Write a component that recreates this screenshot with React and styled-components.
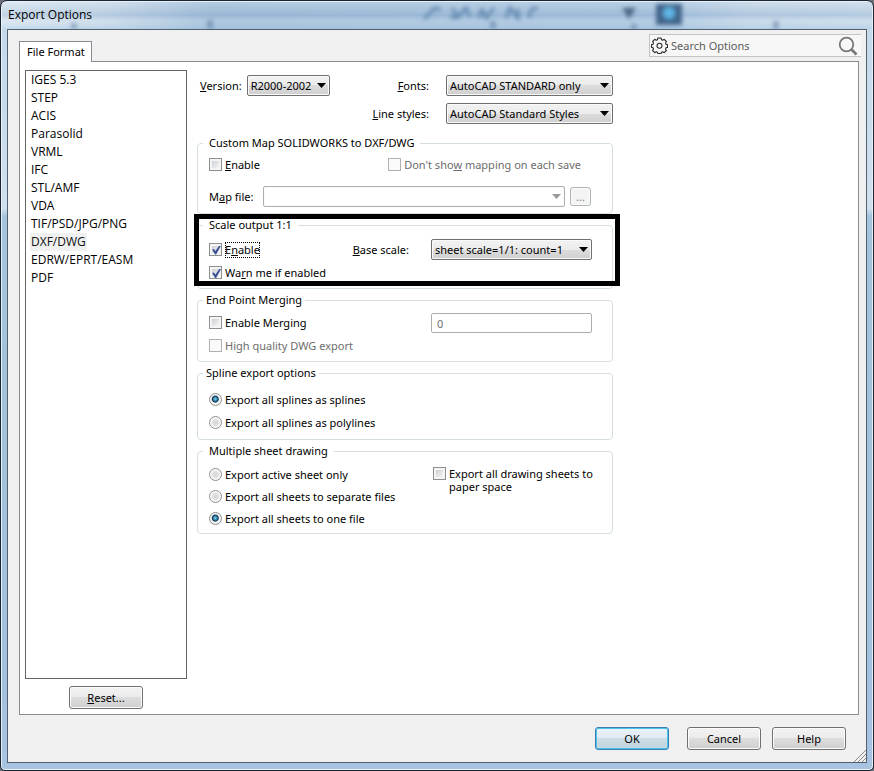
import { useState } from "react";
import styled, { createGlobalStyle, css } from "styled-components";

const GlobalStyle = createGlobalStyle`
	* {
		box-sizing: border-box;
	}
	body {
		margin: 0;
		background: #6b6f78;
	}
	body, button, input, select {
		font-family: "Noto Sans", "Open Sans", sans-serif;
		font-size: 11px;
		line-height: 16px;
		color: #000;
	}
`;

const Window = styled.div`
	position: relative;
	display: flex;
	flex-direction: column;
	min-height: 100vh;
	padding: 0 6px 7px;
	border: 1px solid #1c2430;
	border-radius: 7px 7px 5px 5px;
	background: linear-gradient(180deg, #c3d8ea 0, #cfe0ee 27%, #a5c3dc 28%, #a3c0dc 88%, #a9c4e0 100%);
	box-shadow: inset 0 0 0 1px #e6f2fb;
	overflow: hidden;
`;
const TitleBar = styled.header`
	position: relative;
	display: flex;
	align-items: center;
	height: 28px;
	margin: 0 -5px;
	padding: 0 6px;
`;
const Title = styled.h1`
	position: relative;
	margin: 0;
	font-family: "Open Sans", "Noto Sans", sans-serif;
	font-size: 12px;
	font-weight: 400;
	line-height: 16px;
`;
const Glass = styled.svg`
	position: absolute;
	inset: 0;
	width: 100%;
	height: 100%;
`;
const Client = styled.main`
	display: flex;
	flex-direction: column;
	flex: 1;
	padding: 4px 5px 12px 11px;
	border: 1px solid #52616f;
	background: #f0f0f0;
`;
const TopRow = styled.div`
	display: flex;
	justify-content: space-between;
	align-items: flex-start;
	height: 27px;
`;
const Tab = styled.button`
	align-self: flex-end;
	position: relative;
	height: 21px;
	margin-bottom: -1px;
	padding: 0 6px 0 7px;
	border: 1px solid #898c95;
	border-bottom: none;
	background: #fff;
`;
const SearchBox = styled.label`
	display: flex;
	align-items: center;
	gap: 3px;
	width: 212px;
	height: 23px;
	padding: 0 3px 0 1px;
	border: 1px solid #c4c4c4;
	border-right: none;
	background: #f7f7f7;
`;
const SearchInput = styled.input`
	flex: 1;
	min-width: 0;
	padding: 0;
	border: none;
	outline: none;
	background: transparent;
	&::placeholder {
		color: #5c5c5c;
		opacity: 1;
	}
`;
const Panel = styled.section`
	display: flex;
	flex: 1;
	gap: 10px;
	margin-right: 2px;
	padding: 8px 5px 5px;
	border: 1px solid #898c95;
	background: #fff;
`;
const Side = styled.div`
	display: flex;
	flex-direction: column;
	align-items: center;
	gap: 7px;
	width: 162px;
`;
const FormatList = styled.select`
	flex: 1;
	width: 100%;
	padding: 0 4px;
	border: 1px solid #646464;
	border-radius: 0;
	background: #fff;
	outline: none;
	overflow: hidden;
	font-size: 12px;
	font-family: "Open Sans", "Noto Sans", sans-serif;
	option {
		width: fit-content;
		height: 18px;
		min-height: 18px;
		padding: 0 1px;
		line-height: 18px;
	}
	option:checked {
		background: linear-gradient(#f0f0f0, #f0f0f0);
	}
`;
const Button = styled.button`
	width: ${(p) => (p.$small ? "21px" : "74px")};
	height: ${(p) => (p.$small ? "19px" : "23px")};
	padding: 0;
	border: 1px solid #707070;
	border-radius: 3px;
	background: linear-gradient(#f2f2f2 0, #ebebeb 50%, #dddddd 50%, #cfcfcf 100%);
	box-shadow: inset 0 0 0 1px #fcfcfc;
	${(p) => p.$primary && css`
		margin-right: 7px;
		border-color: #3c7fb1;
		background: linear-gradient(#eaf3f8 0, #dfebf2 50%, #cddde6 50%, #c2d3dd 100%);
		box-shadow: inset 0 0 0 1px #48c4ee;
	`}
	&:disabled {
		border-color: #adb2b5;
		background: #f4f4f4;
		color: #838383;
	}
`;
const Form = styled.form`
	display: flex;
	flex-direction: column;
	flex: 0 1 416px;
	gap: 3px;
	padding-top: 5px;
`;
const Drawing = styled.div`
	display: grid;
	grid-template-columns: auto 83px 1fr 167px;
	align-items: center;
	row-gap: 7px;
	column-gap: 5px;
	margin-bottom: 8px;
	padding-left: 3px;
`;
const FieldLabel = styled.label`
	justify-self: ${(p) => (p.$end ? "end" : "start")};
	padding-right: ${(p) => (p.$end ? "12px" : "0")};
	${(p) => p.$last && css`grid-column: 3;`}
`;
const Drop = styled.div`
	display: grid;
	flex: ${(p) => (p.$grow ? 1 : "none")};
	width: ${(p) => (p.$wide ? "161px" : "auto")};
	align-items: center;
	select, svg {
		grid-area: 1 / 1;
	}
	svg {
		justify-self: end;
		margin-right: 4px;
		pointer-events: none;
	}
`;
const Select = styled.select`
	width: 100%;
	height: 21px;
	padding: 0 16px 0 3px;
	appearance: none;
	border: 1px solid #707070;
	border-radius: 2px;
	background: linear-gradient(#f2f2f2 0, #ebebeb 50%, #dddddd 50%, #cfcfcf 100%);
	box-shadow: inset 0 0 0 1px #fafafa;
	&:disabled {
		border-color: #abadb3;
		background: #fff;
		opacity: 1;
	}
`;
const Group = styled.fieldset`
	position: relative;
	display: flex;
	flex-direction: column;
	gap: ${(p) => p.$gap || 7}px;
	min-width: 0;
	min-height: ${(p) => p.$height}px;
	margin: 0;
	padding: ${(p) => p.$top}px ${(p) => p.$right || 20}px 5px 11px;
	border: 1px solid #d5dfe0;
	border-radius: 4px;
`;
const Legend = styled.legend`
	margin-left: -6px;
	padding: 0 ${(p) => (p.$tight ? 3 : 6)}px;
`;
const Highlight = styled.div`
	position: relative;
	&::after {
		content: "";
		position: absolute;
		inset: -3px -7px 3px -3px;
		border: 5px solid #000;
		pointer-events: none;
	}
`;
const Row = styled.div`
	display: flex;
	align-items: ${(p) => (p.$top ? "flex-start" : "center")};
	justify-content: space-between;
	gap: ${(p) => p.$gap || 0}px;
	padding-right: ${(p) => p.$right || 0}px;
`;
const Stack = styled.div`
	display: flex;
	flex-direction: column;
	gap: 6px;
`;
const MapField = styled(Row)`
	flex: 1;
`;
const Choice = styled.label`
	display: flex;
	align-items: flex-start;
	gap: 3px;
	width: ${(p) => (p.$wrap ? "169px" : "fit-content")};
	line-height: ${(p) => (p.$wrap ? "13px" : "16px")};
	color: ${(p) => (p.$off ? "#6d6d6d" : "#000")};
	input {
		margin-top: ${(p) => (p.$wrap ? "0" : "1px")};
	}
`;
const Focus = styled.span`
	outline: ${(p) => (p.$on ? "1px dotted #000" : "none")};
	outline-offset: -1px;
`;
const Check = styled.input.attrs({ type: "checkbox" })`
	flex: none;
	display: grid;
	place-items: center;
	width: 13px;
	height: 13px;
	margin: 0;
	padding: 2px;
	appearance: none;
	border: 1px solid #8e8f8f;
	background: linear-gradient(135deg, #cbcfd5, #f6f6f6) content-box, #f4f4f4;
	&:disabled {
		border-color: #b1b1b1;
		background: #fafafa;
	}
	&:checked::before {
		content: "";
		width: 9px;
		height: 9px;
		background: #3d5598;
		clip-path: polygon(0 45%, 22% 38%, 38% 62%, 80% 0, 100% 4%, 46% 100%, 34% 100%);
	}
`;
const Radio = styled.input.attrs({ type: "radio" })`
	flex: none;
	width: 13px;
	height: 13px;
	margin: 0;
	appearance: none;
	border: 1px solid #8e8f8f;
	border-radius: 50%;
	background: radial-gradient(circle, #d4d4d4 0, #e2e2e2 3px, #fbfbfb 5px);
	&:checked {
		background: radial-gradient(circle at 48% 46%, #8fdcf2 0, #2a7ca8 2px, #12344f 3px, #f4f4f4 4px);
	}
`;
const TextField = styled.input`
	width: 161px;
	height: 20px;
	padding: 0 5px;
	border: 1px solid #abadb3;
	border-radius: 2px;
	background: #fff;
	color: #6d6d6d;
`;
const Footer = styled.footer`
	display: flex;
	justify-content: flex-end;
	gap: 11px;
	padding: 12px 15px 0 0;
`;
const Grip = styled.svg`
	position: absolute;
	right: 7px;
	bottom: 8px;
`;

const formats = [
	"IGES 5.3", "STEP", "ACIS", "Parasolid", "VRML", "IFC",
	"STL/AMF", "VDA", "TIF/PSD/JPG/PNG", "DXF/DWG", "EDRW/EPRT/EASM", "PDF",
];

function Dropdown({ id, text, grow, wide, disabled }) {
	return (
		<Drop $grow={grow} $wide={wide}>
			<Select id={id} disabled={disabled}>
				<option>{text}</option>
			</Select>
			<svg width="9" height="5" viewBox="0 0 9 5">
				<path d="M0 0h9L4.5 5z" fill={disabled ? "#9a9a9a" : "#000"} />
			</svg>
		</Drop>
	);
}

function GearIcon() {
	return (
		<svg width="17" height="17" viewBox="0 0 17 17" fill="none" stroke="#2b2b2b" strokeWidth="1.1" strokeLinejoin="round">
			<path d="M6.900 1h3.200l.4 1.700 1.200.5 1.500-.9 2.200 2.200-.9 1.500.5 1.200 1.500.4v2.800l-1.500.4-.5 1.200.9 1.500-2.200 2.200-1.500-.9-1.200.5-.4 1.200H6.900l-.4-1.200-1.200-.5-1.500.9-2.200-2.200.9-1.500L2 10.800l-1.400-.4V7.600L2 7.200l.5-1.200-.9-1.500 2.200-2.200 1.500.9 1.200-.5z" />
			<circle cx="8.500" cy="8.800" r="2.500" />
		</svg>
	);
}

function SearchIcon() {
	return (
		<svg width="20" height="20" viewBox="0 0 20 20" fill="none" stroke="#777">
			<circle cx="8.500" cy="8.500" r="6.800" strokeWidth="1.800" />
			<path d="M13.500 13.500l5 5" strokeWidth="2.600" />
		</svg>
	);
}

export default function App() {
	const [scale, setScale] = useState(true);
	const [warn, setWarn] = useState(true);

	return (
		<>
			<GlobalStyle />
			<Window>
				<TitleBar>
					<Glass aria-hidden="true">
						<defs>
							<filter id="soft" x="-20%" y="-50%" width="140%" height="200%">
								<feGaussianBlur stdDeviation="2.200" />
							</filter>
							<linearGradient id="sheen">
								<stop offset="0" stopColor="#d5e3ef" />
								<stop offset="0.120" stopColor="#c6d8e8" />
								<stop offset="0.240" stopColor="#a0bdd9" />
								<stop offset="0.750" stopColor="#a6c3de" />
								<stop offset="0.860" stopColor="#bfd3e6" />
								<stop offset="1" stopColor="#c5d8e8" />
							</linearGradient>
							<linearGradient id="bands" x1="0" y1="0" x2="0" y2="1">
								<stop offset="0" stopColor="#fff" stopOpacity="0.200" />
								<stop offset="0.500" stopColor="#7f9fc4" stopOpacity="0.250" />
								<stop offset="0.700" stopColor="#fff" stopOpacity="0.150" />
								<stop offset="1" stopColor="#9cc4e4" stopOpacity="0.300" />
							</linearGradient>
						</defs>
						<rect y="1" width="100%" height="27" fill="url(#sheen)" />
						<rect y="1" width="100%" height="27" fill="url(#bands)" />
						<g filter="url(#soft)" style={{ colorInterpolationFilters: "sRGB" }}>
							<path d="M422 18l12-12M430 8h9M450 7l6 9 8-9 4 9M448 16h8M476 17l4-8 4 8 8-10M504 17l4-10 8 10v-9M536 7q-10 0-8 10" stroke="#6389b0" strokeWidth="3" fill="none" />
							<path d="M620 7h14l-7 11z" fill="#4a6685" />
							<path d="M654 3h26v21h-26z" fill="#42658a" />
							<circle cx="667" cy="12" r="6" fill="#5fb4e4" />
							<path d="M72 22v6M208 19v9M491 20v8M632 23v6M774 20v8" stroke="#55769b" strokeWidth="5" opacity="0.600" />
						</g>
					</Glass>
					<Title>Export Options</Title>
				</TitleBar>
				<Client>
					<TopRow>
						<Tab type="button">File Format</Tab>
						<SearchBox>
							<GearIcon />
							<SearchInput type="text" placeholder="Search Options" aria-label="Search Options" />
							<SearchIcon />
						</SearchBox>
					</TopRow>
					<Panel>
						<Side>
							<FormatList size={12} defaultValue="DXF/DWG" aria-label="File Format">
								{formats.map((f) => (
									<option key={f} value={f}>{f}</option>
								))}
							</FormatList>
							<Button type="button"><span><u>R</u>eset...</span></Button>
						</Side>
						<Form>
							<Drawing>
								<FieldLabel htmlFor="version"><u>V</u>ersion:</FieldLabel>
								<Dropdown id="version" text="R2000-2002" />
								<FieldLabel $end htmlFor="fonts"><u>F</u>onts:</FieldLabel>
								<Dropdown id="fonts" text="AutoCAD STANDARD only" />
								<FieldLabel $end $last htmlFor="lines"><u>L</u>ine styles:</FieldLabel>
								<Dropdown id="lines" text="AutoCAD Standard Styles" />
							</Drawing>

							<Group $height={79} $top={6} $gap={13} $right={21}>
								<Legend>Custom Map SOLIDWORKS to DXF/DWG</Legend>
								<Row $right={10}>
									<Choice><Check /><span><u>E</u>nable</span></Choice>
									<Choice $off><Check disabled /><span>Don't sho<u>w</u> mapping on each save</span></Choice>
								</Row>
								<Row $gap={10}>
									<FieldLabel htmlFor="mapfile">M<u>a</u>p file:</FieldLabel>
									<MapField $gap={5}>
										<Dropdown id="mapfile" text="" grow disabled />
										<Button type="button" $small disabled aria-label="Browse">...</Button>
									</MapField>
								</Row>
							</Group>

							<Highlight>
								<Group $height={72} $top={6} $gap={5}>
									<Legend>Scale output 1:1</Legend>
									<Row>
										<Choice>
											<Check checked={scale} onChange={(e) => setScale(e.target.checked)} />
											<Focus $on>E<u>n</u>able</Focus>
										</Choice>
										<Row $gap={22}>
											<FieldLabel htmlFor="scale"><u>B</u>ase scale:</FieldLabel>
											<Dropdown id="scale" text="sheet scale=1/1: count=1" wide />
										</Row>
									</Row>
									<Choice>
										<Check checked={warn} onChange={(e) => setWarn(e.target.checked)} />
										<span>Wa<u>r</u>n me if enabled</span>
									</Choice>
								</Group>
							</Highlight>

							<Group $height={70} $top={5} $gap={5}>
								<Legend $tight>End Point Merging</Legend>
								<Row>
									<Choice><Check /><span>Enable Merging</span></Choice>
									<TextField defaultValue="0" disabled aria-label="Merging distance" />
								</Row>
								<Choice $off><Check disabled /><span>High quality DWG export</span></Choice>
							</Group>

							<Group $height={75} $top={11}>
								<Legend $tight>Spline export options</Legend>
								<Choice><Radio name="spline" defaultChecked /><span>Export all splines as splines</span></Choice>
								<Choice><Radio name="spline" /><span>Export all splines as polylines</span></Choice>
							</Group>

							<Group $height={91} $top={8} $right={10}>
								<Legend>Multiple sheet drawing</Legend>
								<Row $top>
									<Stack>
										<Choice><Radio name="sheets" /><span>Export active sheet only</span></Choice>
										<Choice><Radio name="sheets" /><span>Export all sheets to separate files</span></Choice>
										<Choice><Radio name="sheets" defaultChecked /><span>Export all sheets to one file</span></Choice>
									</Stack>
									<Choice $wrap><Check /><span>Export all drawing sheets to paper space</span></Choice>
								</Row>
							</Group>
						</Form>
					</Panel>
					<Footer>
						<Button type="button" $primary>OK</Button>
						<Button type="button">Cancel</Button>
						<Button type="button">Help</Button>
					</Footer>
				</Client>
				<Grip width="12" height="12" viewBox="0 0 12 12" stroke="#8b8b8b">
					<path d="M0 12L12 0M4 12l8-8M8 12l4-4" />
				</Grip>
			</Window>
		</>
	);
}
